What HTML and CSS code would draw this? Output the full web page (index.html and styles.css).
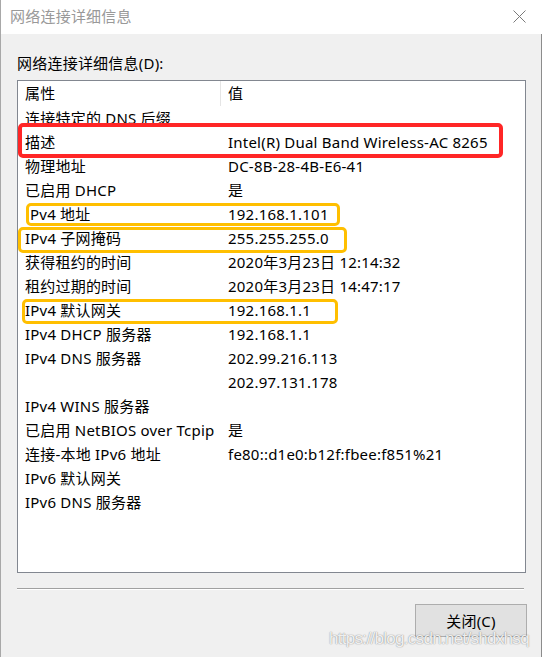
FILE: index.html
```html
<!DOCTYPE html>
<html lang="zh-CN">
<head>
<meta charset="utf-8">
<title>网络连接详细信息</title>
<link rel="stylesheet" href="styles.css">
</head>
<body>
<div class="window">
  <div class="titlebar">
    <span class="title">网络连接详细信息</span>
    <svg class="close" width="13" height="13" viewBox="0 0 13 13"><path d="M0.5 0.5 L12.5 12.5 M12.5 0.5 L0.5 12.5" stroke="#7a7a7a" stroke-width="1" fill="none"/></svg>
  </div>
  <div class="content">
    <div class="label">网络连接详细信息(D):</div>
    <div class="listbox">
      <div class="header">
        <div class="hcell c1">属性</div>
        <div class="hcell c2">值</div>
      </div>
      <div class="row"><div class="c1">连接特定的 DNS 后缀</div><div class="c2"></div></div>
      <div class="row"><div class="c1">描述</div><div class="c2">Intel(R) Dual Band Wireless-AC 8265</div></div>
      <div class="row"><div class="c1">物理地址</div><div class="c2">DC-8B-28-4B-E6-41</div></div>
      <div class="row"><div class="c1">已启用 DHCP</div><div class="c2">是</div></div>
      <div class="row"><div class="c1 shift">Pv4 地址</div><div class="c2">192.168.1.101</div></div>
      <div class="row"><div class="c1">IPv4 子网掩码</div><div class="c2">255.255.255.0</div></div>
      <div class="row"><div class="c1">获得租约的时间</div><div class="c2">2020年3月23日 12:14:32</div></div>
      <div class="row"><div class="c1">租约过期的时间</div><div class="c2">2020年3月23日 14:47:17</div></div>
      <div class="row"><div class="c1">IPv4 默认网关</div><div class="c2">192.168.1.1</div></div>
      <div class="row"><div class="c1">IPv4 DHCP 服务器</div><div class="c2">192.168.1.1</div></div>
      <div class="row"><div class="c1">IPv4 DNS 服务器</div><div class="c2">202.99.216.113</div></div>
      <div class="row"><div class="c1"></div><div class="c2">202.97.131.178</div></div>
      <div class="row"><div class="c1">IPv4 WINS 服务器</div><div class="c2"></div></div>
      <div class="row"><div class="c1">已启用 NetBIOS over Tcpip</div><div class="c2">是</div></div>
      <div class="row"><div class="c1">连接-本地 IPv6 地址</div><div class="c2">fe80::d1e0:b12f:fbee:f851%21</div></div>
      <div class="row"><div class="c1">IPv6 默认网关</div><div class="c2"></div></div>
      <div class="row"><div class="c1">IPv6 DNS 服务器</div><div class="c2"></div></div>
    </div>
    <div class="separator"></div>
    <div class="actions">
      <button class="btn">关闭(C)</button>
    </div>
  </div>
  <div class="mark mark-red"></div>
  <div class="mark mark-o1"></div>
  <div class="mark mark-o2"></div>
  <div class="mark mark-o3"></div>
  <div class="watermark">https://blog.csdn.net/shdxhsq</div>
</div>
</body>
</html>
```

FILE: styles.css
```css
html, body {
  margin: 0;
  padding: 0;
  background: #f0f0f0;
}
.window {
  position: relative;
  width: 542px;
  height: 657px;
  display: flex;
  flex-direction: column;
  font-family: "Noto Sans", "Noto Sans CJK SC", sans-serif;
  font-size: 15px;
  letter-spacing: 0.22px;
  color: #000;
  overflow: hidden;
}
.titlebar {
  height: 34px;
  flex: 0 0 34px;
  background: #fff;
  display: flex;
  align-items: center;
  justify-content: space-between;
  padding: 0 16px 0 10px;
  box-sizing: border-box;
  border-left: 1px solid #a8a8a8;
}
.title {
  color: #999;
  font-size: 15px;
  line-height: 20px;
  margin-left: -1px;
  margin-top: -2px;
}
.close {
  display: block;
  margin-top: -2px;
}
.content {
  flex: 1;
  background: #f0f0f0;
  border-left: 1px solid #a8a8a8;
  border-right: 1px solid #8c8c8c;
  padding: 19px 14px 0 16px;
  display: flex;
  flex-direction: column;
}
.label {
  line-height: 20px;
  height: 20px;
}
.listbox {
  margin-top: 7px;
  width: 509px;
  height: 493px;
  box-sizing: border-box;
  border: 1px solid #828790;
  background: #fff;
}
.header {
  display: flex;
  height: 25px;
  align-items: center;
}
.hcell.c1 {
  border-right: 1px solid #e5e5e5;
  height: 25px;
  line-height: 25px;
  box-sizing: border-box;
  width: 203px;
  padding-left: 7px;
  flex: 0 0 203px;
}
.hcell.c2 {
  padding-left: 7px;
  line-height: 25px;
}
.row {
  display: flex;
  height: 24px;
  line-height: 24px;
}
.row .c1 {
  width: 210px;
  flex: 0 0 210px;
  padding-left: 7px;
  box-sizing: border-box;
  white-space: nowrap;
}
.row .c1.shift {
  padding-left: 12px;
}
.row .c2 {
  white-space: nowrap;
}
.separator {
  margin-top: 15px;
  width: 507px;
  height: 1px;
  background: #a0a0a0;
  border-bottom: 1px solid #fff;
}
.actions {
  display: flex;
  justify-content: flex-end;
  margin-top: 14px;
}
.btn {
  width: 112px;
  height: 33px;
  box-sizing: border-box;
  background: #e1e1e1;
  border: 1px solid #adadad;
  font-family: "Noto Sans", "Noto Sans CJK SC", sans-serif;
  font-size: 15px;
  letter-spacing: 0.22px;
  color: #000;
  padding: 0;
  margin: 0;
}
.mark {
  position: absolute;
  box-sizing: border-box;
  border-radius: 5px;
}
.mark-red {
  left: 18px;
  top: 123px;
  width: 485px;
  height: 35px;
  border: 4px solid #ff2626;
}
.mark-o1 {
  left: 26px;
  top: 203px;
  width: 314px;
  height: 23px;
  border: 3px solid #ffbf00;
}
.mark-o2 {
  left: 18px;
  top: 227px;
  width: 329px;
  height: 26px;
  border: 3px solid #ffbf00;
}
.mark-o3 {
  left: 22px;
  top: 299px;
  width: 316px;
  height: 25px;
  border: 3px solid #ffbf00;
}
.watermark {
  position: absolute;
  left: 329px;
  top: 629px;
  font-family: "Liberation Sans", Arial, sans-serif;
  font-size: 17px;
  letter-spacing: -0.7px;
  line-height: 20px;
  color: rgba(255, 255, 255, 0.9);
  text-shadow: 0 0 1px rgba(0, 0, 0, 0.45), 0 0 2px rgba(0, 0, 0, 0.15);
  white-space: nowrap;
}
```
